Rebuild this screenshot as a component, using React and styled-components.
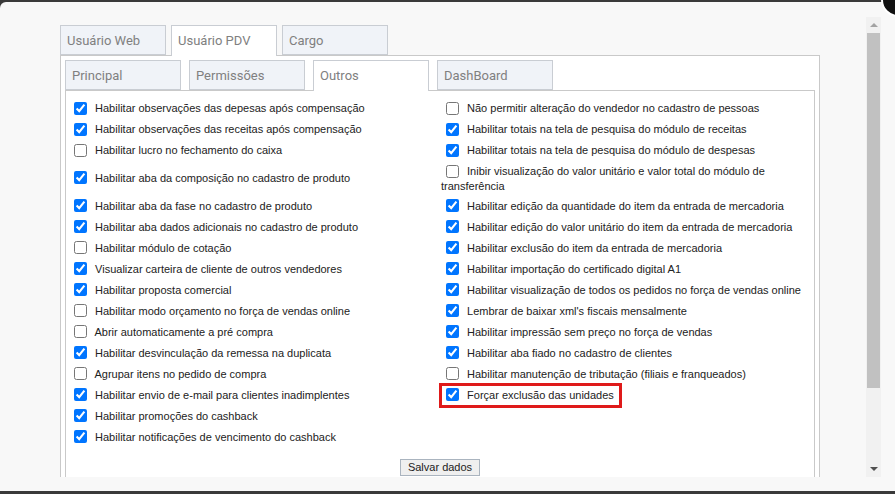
import React from "react";
import styled, { createGlobalStyle } from "styled-components";

const GlobalStyle = createGlobalStyle`
  html, body {
    margin: 0;
    padding: 0;
  }
  body {
    width: 895px;
    height: 494px;
    overflow: hidden;
    background: #3a3a3a;
    font-family: "Liberation Sans", Arial, sans-serif;
  }
`;

const Modal = styled.div`
  position: relative;
  margin-top: 2px;
  height: 489px;
  box-sizing: border-box;
  padding-top: 15px;
  background: #f8f8f8;
  border-radius: 6px 6px 0 0;
`;

const CloseButton = styled.div`
  position: absolute;
  top: -19px;
  right: -20px;
  width: 30px;
  height: 30px;
  border-radius: 50%;
  background: #111;
  border: 2px solid #fff;
`;

const Body = styled.div`
  display: flex;
  height: 460px;
`;

const Content = styled.div`
  flex: 1;
  overflow: hidden;
  padding: 8px 0 0 60px;
`;

const Scrollbar = styled.div`
  width: 15px;
  margin-right: 14px;
  background: #f1f1f1;
  display: flex;
  flex-direction: column;
  align-items: center;
`;

const ScrollButton = styled.div`
  height: 16px;
  width: 15px;
  display: flex;
  align-items: center;
  justify-content: center;
  &::after {
    content: "";
    width: 0;
    height: 0;
    border-left: 4px solid transparent;
    border-right: 4px solid transparent;
    ${p => p.down
      ? "border-top: 4px solid #505050;"
      : "border-bottom: 4px solid #a3a3a3;"}
  }
`;

const Thumb = styled.div`
  width: 13px;
  height: 355px;
  background: #c1c1c1;
`;

const Spacer = styled.div`
  flex: 1;
`;

const TabsBox = styled.div`
  width: 760px;
`;

const TabBar = styled.div`
  display: flex;
  gap: ${p => p.gap}px;
  height: 30px;
`;

const Tab = styled.div`
  position: relative;
  z-index: ${p => (p.active ? 1 : 0)};
  box-sizing: border-box;
  width: ${p => p.width}px;
  height: ${p => (p.active ? 31 : 30)}px;
  padding: 0 6px ${p => (p.active ? 1 : 0)}px;
  display: flex;
  align-items: center;
  border: 1px solid #c9cdd3;
  border-bottom: ${p => (p.active ? "none" : "1px solid #c9cdd3")};
  background: ${p => (p.active ? "#fff" : "#f0f3f8")};
  color: #808080;
  font-family: Roboto, "Liberation Sans", sans-serif;
  font-size: 13px;
  white-space: nowrap;
`;

const Panel = styled.div`
  box-sizing: border-box;
  border: 1px solid #c9c9c9;
  background: #fff;
  padding: ${p => p.pad};
`;

const Grid = styled.div`
  display: grid;
  grid-template-columns: 371px 1fr;
  align-items: center;
`;

const Cell = styled.div`
  box-sizing: border-box;
  min-height: 21px;
  padding: 3px 0;
  font-size: 11px;
  line-height: 14px;
  color: #222;
  justify-self: ${p => (p.highlight ? "start" : "stretch")};
  padding-right: ${p => (p.highlight ? "6px" : "0")};
  outline: ${p => (p.highlight ? "3px solid #df1a1a" : "none")};
  outline-offset: -1px;
`;

const Check = styled.input`
  width: 13px;
  height: 13px;
  margin: 0 5px 0 ${p => p.left}px;
  vertical-align: middle;
  position: relative;
  top: -1px;
`;

const Footer = styled.div`
  display: flex;
  justify-content: center;
  padding: 11px 0 10px;
`;

const SaveButton = styled.button`
  height: 17px;
  width: 80px;
  padding: 0;
  border: 1px solid #aab4bf;
  background: #efefef;
  color: #222;
  font-family: "Liberation Sans", Arial, sans-serif;
  font-size: 11px;
  line-height: 15px;
`;

const leftItems = [
  [true, "Habilitar observações das depesas após compensação"],
  [true, "Habilitar observações das receitas após compensação"],
  [false, "Habilitar lucro no fechamento do caixa"],
  [true, "Habilitar aba da composição no cadastro de produto"],
  [true, "Habilitar aba da fase no cadastro de produto"],
  [true, "Habilitar aba dados adicionais no cadastro de produto"],
  [false, "Habilitar módulo de cotação"],
  [true, "Visualizar carteira de cliente de outros vendedores"],
  [true, "Habilitar proposta comercial"],
  [false, "Habilitar modo orçamento no força de vendas online"],
  [false, "Abrir automaticamente a pré compra"],
  [true, "Habilitar desvinculação da remessa na duplicata"],
  [false, "Agrupar itens no pedido de compra"],
  [true, "Habilitar envio de e-mail para clientes inadimplentes"],
  [true, "Habilitar promoções do cashback"],
  [true, "Habilitar notificações de vencimento do cashback"],
];

const rightItems = [
  [false, "Não permitir alteração do vendedor no cadastro de pessoas"],
  [true, "Habilitar totais na tela de pesquisa do módulo de receitas"],
  [true, "Habilitar totais na tela de pesquisa do módulo de despesas"],
  [false, "Inibir visualização do valor unitário e valor total do módulo de transferência"],
  [true, "Habilitar edição da quantidade do item da entrada de mercadoria"],
  [true, "Habilitar edição do valor unitário do item da entrada de mercadoria"],
  [true, "Habilitar exclusão do item da entrada de mercadoria"],
  [true, "Habilitar importação do certificado digital A1"],
  [true, "Habilitar visualização de todos os pedidos no força de vendas online"],
  [true, "Lembrar de baixar xml's fiscais mensalmente"],
  [true, "Habilitar impressão sem preço no força de vendas"],
  [true, "Habilitar aba fiado no cadastro de clientes"],
  [false, "Habilitar manutenção de tributação (filiais e franqueados)"],
  [true, "Forçar exclusão das unidades", true],
];

const outerTabs = ["Usuário Web", "Usuário PDV", "Cargo"];
const innerTabs = ["Principal", "Permissões", "Outros", "DashBoard"];

const App = () => {
  const rows = leftItems.map((l, i) => [l, rightItems[i]]);
  return (
    <>
      <GlobalStyle />
      <Modal>
        <Body>
          <Content>
            <TabsBox>
              <TabBar gap={5}>
                {outerTabs.map((t, i) => (
                  <Tab key={t} width={106} active={i === 1}>{t}</Tab>
                ))}
              </TabBar>
              <Panel pad="4px 4px 0 4px">
                <TabBar gap={8}>
                  {innerTabs.map((t, i) => (
                    <Tab key={t} width={116} active={i === 2}>{t}</Tab>
                  ))}
                </TabBar>
                <Panel pad="7px 4px 0 4px">
                  <Grid>
                    {rows.map(([l, r], i) => (
                      <React.Fragment key={i}>
                        <Cell>
                          <Check type="checkbox" left={4} defaultChecked={l[0]} /> {l[1]}
                        </Cell>
                        {r ? (
                          <Cell highlight={r[2]}>
                            <Check type="checkbox" left={5} defaultChecked={r[0]} /> {r[1]}
                          </Cell>
                        ) : <Cell />}
                      </React.Fragment>
                    ))}
                  </Grid>
                  <Footer>
                    <SaveButton>Salvar dados</SaveButton>
                  </Footer>
                </Panel>
              </Panel>
            </TabsBox>
          </Content>
          <Scrollbar>
            <ScrollButton />
            <Thumb />
            <Spacer />
            <ScrollButton down />
          </Scrollbar>
        </Body>
        <CloseButton />
      </Modal>
    </>
  );
};

export default App;
